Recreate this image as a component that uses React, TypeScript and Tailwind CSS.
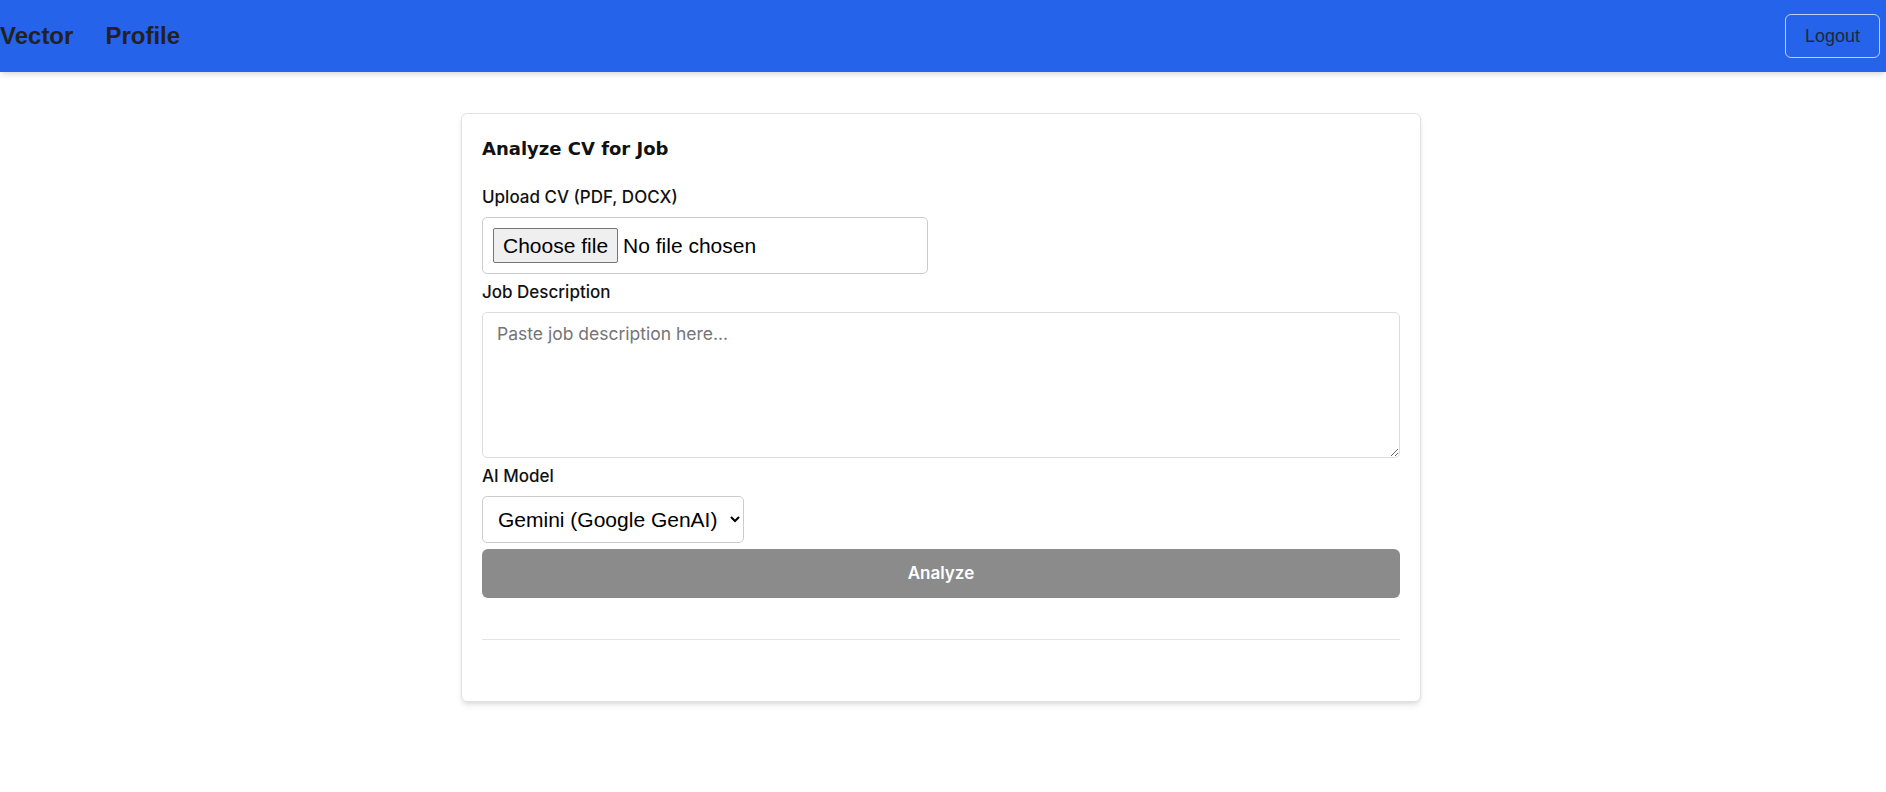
import { useState } from "react";

export default function App() {
  const [model, setModel] = useState("gemini");
  const [jobDescription, setJobDescription] = useState("");
  const [fileName, setFileName] = useState<string | null>(null);

  return (
    <div className="min-h-screen bg-white" style={{ fontFamily: "Inter, 'Liberation Sans', sans-serif" }}>
      {/* Navbar */}
      <nav className="relative z-10 flex h-[72px] items-center justify-between bg-[#2563eb] shadow-md">
        <div className="flex items-center gap-[32px] font-['Liberation_Sans',Arial,sans-serif] text-[24px] font-bold text-[#222222]">
          <a href="#">Vector</a>
          <a href="#">Profile</a>
        </div>
        <button className="mr-[6px] h-[44px] w-[95px] rounded-[6px] border border-white/70 font-['Liberation_Sans',Arial,sans-serif] text-[18px] text-[#1e293b]">
          Logout
        </button>
      </nav>

      {/* Analyze card */}
      <div className="flex justify-center pr-[4px] pt-[41px]">
        <div className="w-[960px] rounded-[6px] border border-[#e2e2e2] bg-white p-5 shadow-md">
          <h2 className="font-['DejaVu_Sans',sans-serif] text-[18px] font-bold leading-[30px] text-[#111111]">Analyze CV for Job</h2>

          <form className="flex flex-col" onSubmit={(e) => e.preventDefault()}>
            <label className="mt-[21px] mb-2 text-[17px] font-medium leading-[24px] text-[#111111]">Upload CV (PDF, DOCX)</label>
            <label className="flex h-[57px] w-[446px] cursor-pointer items-center rounded-[5px] border border-[#cccccc] p-[10px] font-['Liberation_Sans',Arial,sans-serif] text-[21px] text-black">
              <input
                type="file"
                accept=".pdf,.docx"
                className="hidden"
                onChange={(e) => setFileName(e.target.files?.[0]?.name ?? null)}
              />
              <span className="flex h-[35px] items-center rounded-[2px] border border-[#767676] bg-[#efefef] px-[9px]">Choose file</span>
              <span className="ml-[5px]">{fileName ?? "No file chosen"}</span>
            </label>

            <label className="mt-[6px] mb-2 text-[17px] font-medium leading-[24px] text-[#111111]">Job Description</label>
            <textarea
              value={jobDescription}
              onChange={(e) => setJobDescription(e.target.value)}
              placeholder="Paste job description here..."
              className="h-[146px] w-full rounded-[5px] border border-[#dddddd] px-[14px] pt-[9px] text-[17.5px] leading-[24px] placeholder:text-[#757575] focus:outline-none"
            />

            <label className="mt-[6px] mb-2 text-[17px] font-medium leading-[24px] text-[#111111]">AI Model</label>
            <select
              value={model}
              onChange={(e) => setModel(e.target.value)}
              className="h-[47px] w-[262px] rounded-[5px] border border-[#cccccc] bg-white pl-[11px] pr-[6px] font-['Liberation_Sans',Arial,sans-serif] text-[21px] text-black"
            >
              <option value="gemini">Gemini (Google GenAI)</option>
              <option value="openai">OpenAI (GPT)</option>
            </select>

            <button
              type="submit"
              disabled
              className="mt-[6px] h-[49px] w-full rounded-[6px] border-0 bg-[#8b8b8c] text-[17px] font-semibold text-white"
            >
              Analyze
            </button>
          </form>

          <hr className="mt-[41px] mb-[41px] border-t border-[#e5e5e5]" />
        </div>
      </div>
    </div>
  );
}
